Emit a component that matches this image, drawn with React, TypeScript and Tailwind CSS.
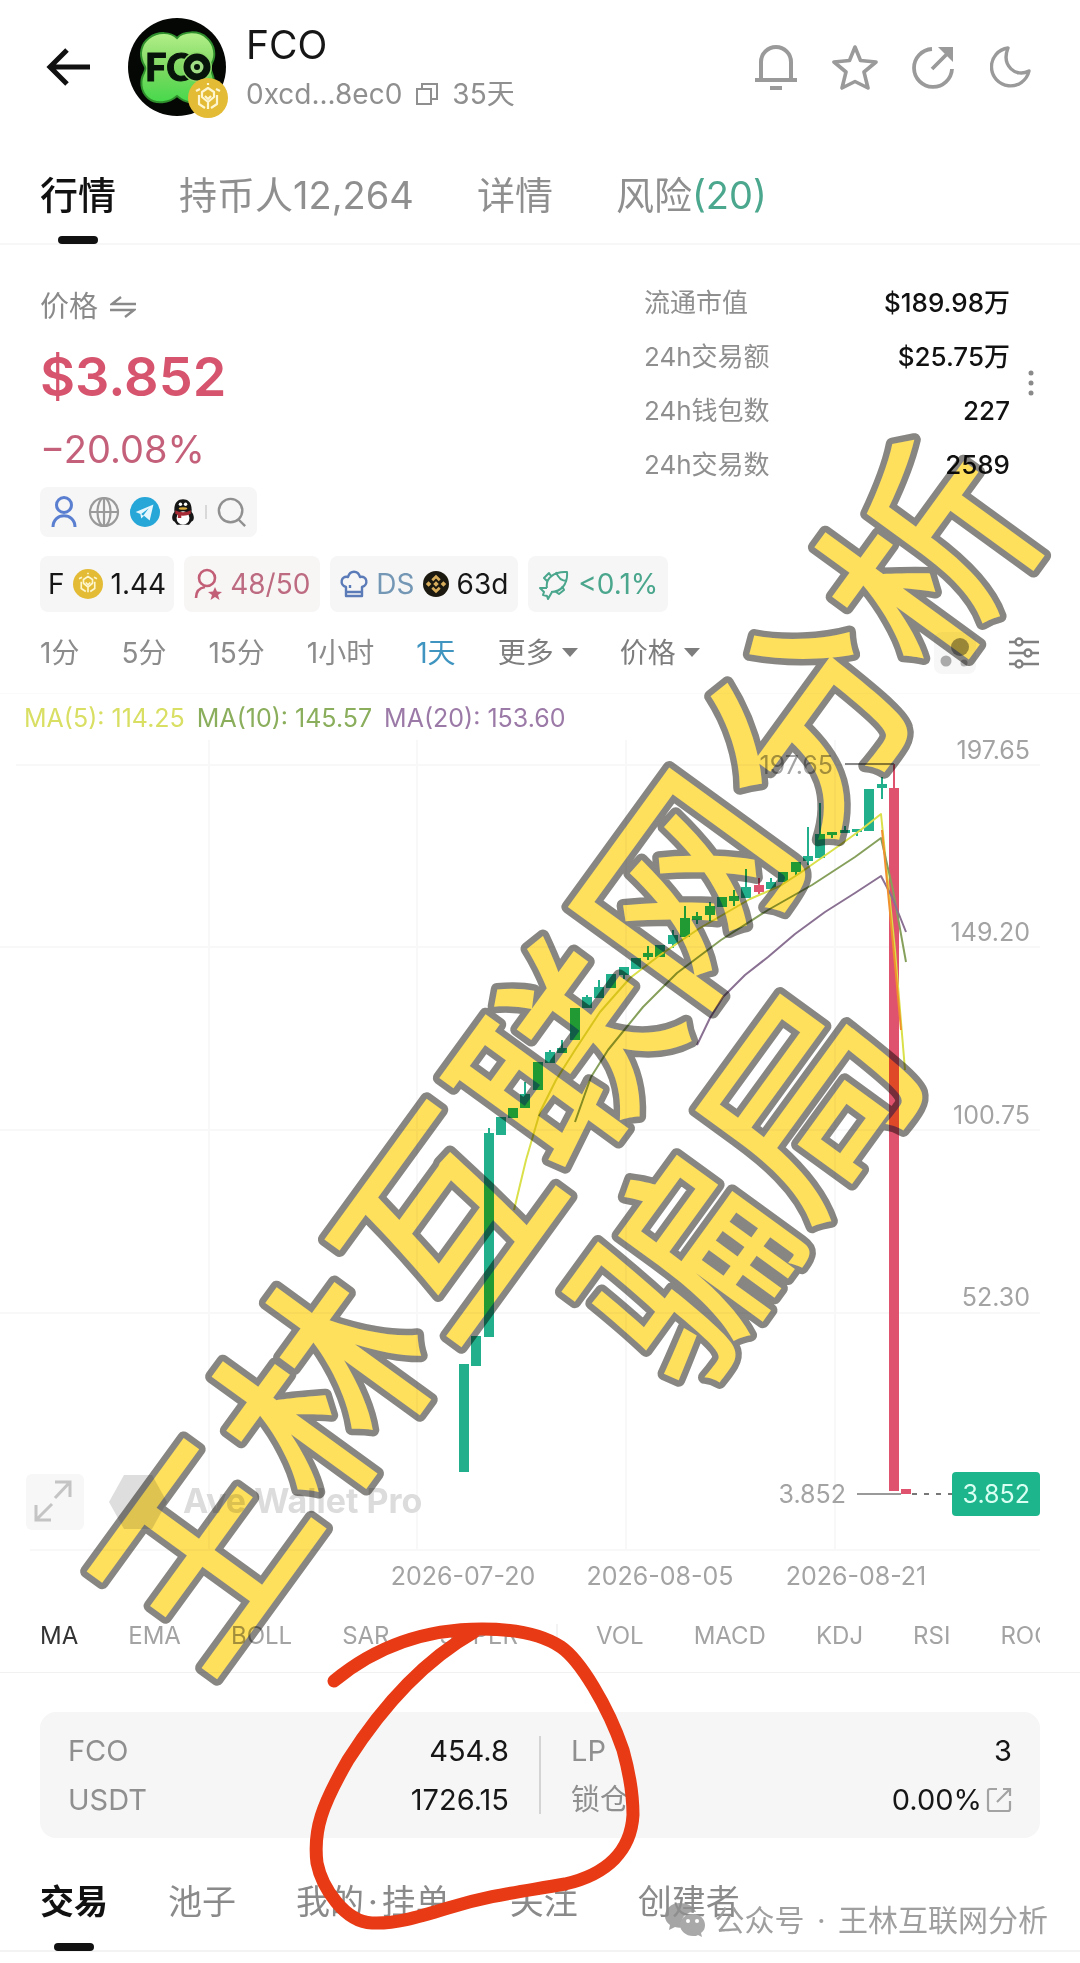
import React from "react";

type Candle = { top: number; bottom: number; high?: number; low?: number; down?: boolean };

const candles: Candle[] = [
  { top: 1364, bottom: 1472 },
  { top: 1336, bottom: 1366 },
  { top: 1133, bottom: 1337, high: 1128 },
  { top: 1117, bottom: 1135 },
  { top: 1108, bottom: 1118 },
  { top: 1094, bottom: 1108, high: 1082 },
  { top: 1062, bottom: 1090 },
  { top: 1052, bottom: 1063, high: 1050 },
  { top: 1048, bottom: 1053, high: 1040 },
  { top: 1008, bottom: 1040 },
  { top: 997, bottom: 1008, high: 995 },
  { top: 987, bottom: 998, high: 980 },
  { top: 974, bottom: 988 },
  { top: 967, bottom: 975, low: 979 },
  { top: 958, bottom: 969 },
  { top: 953, bottom: 957, high: 946, low: 960 },
  { top: 945, bottom: 957 },
  { top: 935, bottom: 944, high: 930, low: 948 },
  { top: 918, bottom: 937, high: 906 },
  { top: 916, bottom: 920, high: 912, low: 924 },
  { top: 906, bottom: 915, high: 902, low: 921 },
  { top: 897, bottom: 907 },
  { top: 896, bottom: 901, high: 890, low: 906 },
  { top: 887, bottom: 898, high: 869 },
  { top: 885, bottom: 892, high: 878, low: 894, down: true },
  { top: 882, bottom: 889, high: 878 },
  { top: 872, bottom: 882 },
  { top: 862, bottom: 872, low: 876 },
  { top: 856, bottom: 861, high: 827, low: 865 },
  { top: 834, bottom: 858, high: 803 },
  { top: 832, bottom: 835, low: 838 },
  { top: 830, bottom: 833, high: 826 },
  { top: 829, bottom: 832, low: 836 },
  { top: 789, bottom: 831 },
  { top: 784, bottom: 788, high: 777, low: 799 },
  { top: 788, bottom: 1491, high: 764, down: true },
  { top: 1489, bottom: 1494, down: true },
];

const stats = [
  ["流通市值", "$189.98万"],
  ["24h交易额", "$25.75万"],
  ["24h钱包数", "227"],
  ["24h交易数", "2589"],
];

const UP = "#22b08c";
const DOWN = "#e0536e";

function BnbCoin({ className }: { className: string }) {
  return (
    <svg viewBox="0 0 40 40" className={className} fill="none" aria-hidden="true">
      <circle cx="20" cy="20" r="20" fill="#e3bb35" />
      <g stroke="#fdf6cf" strokeWidth="2.2" strokeLinejoin="round">
        <path d="M14 14l6-4 6 4v5l-6 5-6-5zM20 24v7M11 17v9l6 4M29 17v9l-6 4" />
        <path d="M8 13l4-2M32 13l-4-2M20 5v2M17 18l3 3 3-3" />
      </g>
    </svg>
  );
}

function Header() {
  return (
    <header className="flex h-[134px] items-center pl-[46px] pr-12">
      <button aria-label="返回" className="mr-9">
        <svg viewBox="0 0 46 40" className="h-10 w-[46px]" fill="none" stroke="#111" strokeWidth="5">
          <path d="M44 20H5M21 3L4 20l17 17" />
        </svg>
      </button>
      <div className="relative h-[98px] w-[98px] shrink-0">
        <svg viewBox="0 0 98 98" className="h-full w-full">
          <defs>
            <linearGradient id="leaf" x1="0" y1="0" x2="0" y2="1">
              <stop offset="0" stopColor="#b4f08a" />
              <stop offset="0.5" stopColor="#7fd962" />
              <stop offset="1" stopColor="#46d94c" />
            </linearGradient>
          </defs>
          <circle cx="49" cy="49" r="49" fill="#050705" />
          <path
            d="M49 20c6-7 22-8 30 0 8 7 9 18 5 25-2 5-2 5 0 10 4 10 2 21-7 27-9 5-20 3-28-4-8 7-21 9-29 2-8-7-8-18-4-25 2-5 2-5-1-10-4-9-2-19 6-25 9-7 22-6 28 0z"
            fill="url(#leaf)"
            stroke="#2f8f2c"
            strokeWidth="2"
          />
          <text x="17" y="63" fontFamily="Lato, sans-serif" fontWeight="900" fontSize="38" fill="#07140a" stroke="#07140a" strokeWidth="1">
            FC
          </text>
          <circle cx="69" cy="49" r="15" fill="#8edb6c" />
          <circle cx="69" cy="49" r="10" fill="#9fdc84" stroke="#07140a" strokeWidth="7" />
          <circle cx="69" cy="49" r="3" fill="#07140a" />
        </svg>
        <BnbCoin className="absolute -bottom-0.5 -right-0.5 h-10 w-10" />
      </div>
      <div className="ml-5 flex-1">
        <h1 className="text-[39px] leading-[46px] text-[#161616]">FCO</h1>
        <div className="mt-2 flex items-center text-[28px] leading-[36px] text-[#8f8f8f]">
          <span>0xcd...8ec0</span>
          <button aria-label="复制地址" className="mx-[13px]">
            <svg viewBox="0 0 24 24" className="h-6 w-6" fill="none" stroke="#8f8f8f" strokeWidth="2">
              <path d="M2 7h14v15H2zM7 7V2h15v15h-6" />
            </svg>
          </button>
          <span>35天</span>
        </div>
      </div>
      <div className="flex items-center gap-[34px]">
        <button aria-label="提醒">
          <svg viewBox="0 0 44 46" className="h-[46px] w-11" fill="none" stroke="#9a9a9a" strokeWidth="4">
            <path d="M7 35V18a15 15 0 0 1 30 0v17M1 36h42M16 44h12" />
          </svg>
        </button>
        <button aria-label="收藏">
          <svg viewBox="0 0 46 46" className="h-[46px] w-[46px]" fill="none" stroke="#9a9a9a" strokeWidth="3.6" strokeLinejoin="round">
            <path d="M23 3l5.500 13.500 15.500 1.500-12 10 4 16L23 37.500 10 44l4-16L2 18l15.500-1.500z" />
          </svg>
        </button>
        <button aria-label="分享">
          <svg viewBox="0 0 44 44" className="h-11 w-11" fill="none" stroke="#9a9a9a" strokeWidth="3.8">
            <path d="M20 4A19 19 0 1 0 40 24M20 24L35 9" />
            <path d="M26 2h15v15z" fill="#9a9a9a" stroke="none" />
          </svg>
        </button>
        <button aria-label="深色模式">
          <svg viewBox="0 0 42 42" className="h-[42px] w-[42px]" fill="none" stroke="#9a9a9a" strokeWidth="3.4" strokeLinejoin="round">
            <path d="M18 2A19 19 0 1 0 39 25C26 32 11 20 18 2z" />
          </svg>
        </button>
      </div>
    </header>
  );
}

function Summary() {
  return (
    <section className="flex justify-between pl-10 pr-11">
      <div>
        <button className="mt-[42px] flex h-10 items-center gap-3 text-[29px] leading-10 text-[#8a8a8a]">
          价格
          <svg viewBox="0 0 26 22" className="h-[22px] w-[26px]" fill="none" stroke="#8a8a8a" strokeWidth="2.400">
            <path d="M26 8H2l9-7M0 14h24l-9 7" />
          </svg>
        </button>
        <p className="mt-5 text-[54px] font-semibold leading-[60px] text-[#d6546d]">$3.852</p>
        <p className="mt-5 text-[38px] leading-[44px] text-[#c4607a]">−20.08%</p>
        <div className="mt-4 flex h-[50px] w-[217px] items-center justify-between rounded-lg bg-[#f6f6f6] px-2.5">
          <svg viewBox="0 0 28 32" className="h-8 w-7" fill="none" stroke="#5b7fd0" strokeWidth="3">
            <circle cx="14" cy="9" r="7.500" />
            <path d="M3 31c0-15 22-15 22 0" />
          </svg>
          <svg viewBox="0 0 32 32" className="h-8 w-8" fill="none" stroke="#9a9a9a" strokeWidth="2.200">
            <circle cx="16" cy="16" r="14" />
            <ellipse cx="16" cy="16" rx="6.500" ry="14" />
            <path d="M2 16h28M16 2v28" />
          </svg>
          <svg viewBox="0 0 32 32" className="h-[30px] w-[30px]">
            <circle cx="16" cy="16" r="16" fill="#27a6d8" />
            <path d="M6 16L25 8l-4 17-6-5-3 3-1-5z" fill="#e6f6fd" />
            <path d="M12 18l8-6-6 8z" fill="#27a6d8" />
          </svg>
          <svg viewBox="0 0 28 34" className="h-[30px] w-6">
            <path d="M4 28c-3 0-4-7 0-11C3 6 8 2 14 2s11 4 10 15c4 4 3 11 0 11l-3 4H7z" fill="#161616" />
            <ellipse cx="14" cy="24" rx="7.500" ry="8" fill="#fff" />
            <path d="M5 15c5 3 13 3 18 0v4c-5 3-13 3-18 0z" fill="#a52a33" />
            <path d="M8 18h4v6H8z" fill="#a52a33" />
            <circle cx="11" cy="8" r="2" fill="#fff" />
            <circle cx="17" cy="8" r="2" fill="#fff" />
            <ellipse cx="14" cy="13" rx="5" ry="1.500" fill="#d8ab3c" />
          </svg>
          <span className="h-3.5 w-0.5 bg-[#d8d8d8]" />
          <svg viewBox="0 0 32 32" className="h-[30px] w-[30px]" fill="none" stroke="#909090" strokeWidth="2.600">
            <circle cx="14.500" cy="14.500" r="12.500" />
            <path d="M23 24l7 7" />
          </svg>
        </div>
      </div>
      <div className="flex items-center gap-4 self-start pt-[30px]">
        <dl className="w-[366px] text-[26px]">
          {stats.map(([label, value]) => (
            <div key={label} className="flex h-[54px] items-center justify-between">
              <dt className="text-[#8f8f8f]">{label}</dt>
              <dd className="font-medium text-[#111]">{value}</dd>
            </div>
          ))}
        </dl>
        <button aria-label="更多数据">
          <svg viewBox="0 0 10 28" className="h-7 w-2.5" fill="#8a8a8a">
            <circle cx="5" cy="4" r="2.500" />
            <circle cx="5" cy="14" r="2.500" />
            <circle cx="5" cy="24" r="2.500" />
          </svg>
        </button>
      </div>
    </section>
  );
}

function Chips() {
  return (
    <div className="mt-[19px] flex gap-2.5 px-10 text-[28px] leading-8 text-[#161616]">
      <div className="flex h-14 items-center gap-2 rounded-lg bg-[#f6f6f6] px-2">
        F <BnbCoin className="h-[30px] w-[30px]" /> 1.44
      </div>
      <div className="flex h-14 items-center gap-2 rounded-lg bg-[#f8f5f5] px-2.5 text-[#bd6b80]">
        <svg viewBox="0 0 28 32" className="h-8 w-7" fill="none" stroke="#c25f77" strokeWidth="2.600">
          <circle cx="13" cy="10" r="8" />
          <path d="M2 30c0-6 3-10 9-11" />
          <path d="M21 19l2 4.500 5 .5-4 3 1.500 5-4.500-3-4.500 3 1.500-5-4-3 5-.5z" fill="#c25f77" stroke="none" />
        </svg>
        48/50
      </div>
      <div className="flex h-14 items-center gap-2 rounded-lg bg-[#f6f6f6] px-2.5">
        <svg viewBox="0 0 28 28" className="h-7 w-7" fill="none" stroke="#5b7bb8" strokeWidth="2.400" strokeLinejoin="round">
          <path d="M6 17C-1 15 1 5 8 7c2-7 10-7 12 0 7-2 9 8 2 10v9H6zM6 22h16M10 15v3" />
        </svg>
        <span className="text-[#7397b5]">DS</span>
        <svg viewBox="0 0 28 28" className="h-[26px] w-[26px]">
          <circle cx="14" cy="14" r="14" fill="#1c1a10" />
          <path d="M14 4l5 5-2 2-3-3-3 3-2-2zM14 24l5-5-2-2-3 3-3-3-2 2zM14 11l3 3-3 3-3-3zM6 11l3 3-3 3-3-3zM22 11l3 3-3 3-3-3z" fill="#d8ad5c" />
        </svg>
        63d
      </div>
      <div className="flex h-14 items-center gap-2 rounded-lg bg-[#f6f6f6] px-2.5 text-[#4aa68c]">
        <svg viewBox="0 0 32 32" className="h-8 w-8" fill="none" stroke="#4aa68c" strokeWidth="2" strokeLinejoin="round">
          <path d="M9 20C7 10 17 3 29 4c1 12-6 20-16 20M9 20H2l4 4-1 3 4 1 1 3 4-7M13 8l-2-3-5 5 3 3M18 4c2 6 5 9 11 9M24 18l2 4-5 4-3-2" />
        </svg>
        &lt;0.1%
      </div>
    </div>
  );
}

function Toolbar() {
  const caret = <span className="ml-2 border-x-8 border-t-[9px] border-x-transparent border-t-[#7d7d7d]" />;
  return (
    <div className="flex h-[82px] items-center gap-[42px] border-b border-[#fafafa] px-10 text-[28px] text-[#8c8c8c]">
      <button>1分</button>
      <button>5分</button>
      <button>15分</button>
      <button>1小时</button>
      <button className="text-[#3f95c0]">1天</button>
      <button className="flex items-center text-[#7d7d7d]">更多{caret}</button>
      <button className="flex items-center text-[#7d7d7d]">价格{caret}</button>
      <div className="ml-auto flex items-center gap-8">
        <button aria-label="气泡图" className="rounded-lg bg-[#f7f7f7] p-1">
          <svg viewBox="0 0 34 34" className="h-[34px] w-[34px]">
            <circle cx="22" cy="11" r="9" fill="#999" />
            <circle cx="8" cy="25" r="5.500" fill="#aaa" />
            <circle cx="26" cy="27" r="3.500" fill="#b5b5b5" />
          </svg>
        </button>
        <button aria-label="指标设置">
          <svg viewBox="0 0 32 32" className="h-8 w-8" fill="none" stroke="#808080" strokeWidth="2.400">
            <path d="M1 5h6M15 5h16M1 16h15M24 16h7M1 27h6M15 27h16" />
            <circle cx="11" cy="5" r="3.500" />
            <circle cx="20" cy="16" r="3.500" />
            <circle cx="11" cy="27" r="3.500" />
          </svg>
        </button>
      </div>
    </div>
  );
}

function Chart() {
  return (
    <section>
      <div className="flex h-[46px] items-center gap-3 pl-6 pt-1 text-[25px]">
        <span className="text-[#d9df63]">MA(5): 114.25</span>
        <span className="text-[#8aae5c]">MA(10): 145.57</span>
        <span className="text-[#9c7aa8]">MA(20): 153.60</span>
      </div>
      <svg viewBox="0 740 1080 860" className="block w-full" fontFamily="Inter, sans-serif" fontSize="25" role="img" aria-label="FCO 日线图">
        <g stroke="#f8f8f8" strokeWidth="2">
          <path d="M16 765H1040M0 947H1040M0 1130H1040M0 1313H1040M30 1550H1040" />
          <path d="M209 740V1550M417 740V1550M626 740V1550M835 740V1550" />
        </g>

        <rect x="26" y="1474" width="58" height="56" rx="6" fill="#f7f7f7" />
        <path d="M55 1482h15v15M70 1482L55 1498M36 1505v15h15M36 1520l16-16" fill="none" stroke="#c4c4c4" strokeWidth="3" />
        <path d="M124 1475h28l15 27-15 27h-28l-15-27z" fill="#dedede" />
        <text x="183" y="1513" fontSize="34" fontWeight="700" fill="#dcdcdc">
          Ave Wallet Pro
        </text>

        {candles.map((c, i) => {
          const x = Math.round(459 + i * 12.28);
          const color = c.down ? DOWN : UP;
          return (
            <g key={i} fill={color}>
              <rect x={x} y={c.top} width="10" height={c.bottom - c.top} />
              <rect x={x + 4} y={c.high ?? c.top} width="2" height={(c.low ?? c.bottom) - (c.high ?? c.top)} />
            </g>
          );
        })}

        <g fill="none" strokeWidth="2" strokeLinejoin="round">
          <path
            d="M514 1210L526 1160 540 1112 556 1080 575 1050 600 1012 630 978 660 955 700 928 750 899 780 886 800 873 840 845 862 829 881 814 895 950 905 1070"
            stroke="#d9e04a"
          />
          <path d="M575 1122L591 1077 608 1050 643 1007 677 973 721 940 768 910 812 885 855 857 881 838 893 890 906 962" stroke="#86a05c" />
          <path d="M697 1045L710 1018 723 997 745 975 768 957 795 934 825 912 855 893 881 876 892 897 906 932" stroke="#8a7092" />
          <path d="M882 830L896 975 901 1030" stroke="#f0912e" />
        </g>

        <g fill="#a3a3a3">
          <text x="833" y="774" textAnchor="end">197.65</text>
          <path d="M845 764h49" stroke="#888" strokeWidth="2" />
          <text x="846" y="1503" textAnchor="end">3.852</text>
          <path d="M857 1494h44" stroke="#999" strokeWidth="2" />
          <path d="M912 1494h40" stroke="#777" strokeWidth="2" strokeDasharray="5 7" />
          <g textAnchor="end">
            <text x="1030" y="759">197.65</text>
            <text x="1030" y="941">149.20</text>
            <text x="1030" y="1124">100.75</text>
            <text x="1030" y="1306">52.30</text>
          </g>
          <g textAnchor="middle">
            <text x="463" y="1585">2026-07-20</text>
            <text x="660" y="1585">2026-08-05</text>
            <text x="856" y="1585">2026-08-21</text>
          </g>
        </g>
        <rect x="952" y="1472" width="88" height="44" rx="4" fill="#1cb58c" />
        <text x="1030" y="1503" textAnchor="end" fill="#d9fff2">
          3.852
        </text>
      </svg>
    </section>
  );
}

function Indicators() {
  return (
    <div className="border-b border-[#f1f1f1]">
      <div className="mx-10 flex h-[72px] items-center gap-[50px] overflow-hidden whitespace-nowrap text-[24px] text-[#a3a3a3]">
        <button className="text-[#333]">MA</button>
        <button>EMA</button>
        <button>BOLL</button>
        <button>SAR</button>
        <button>SUPER</button>
        <span className="-mx-3 h-6 w-0.5 shrink-0 bg-[#f3f3f3]" />
        <button>VOL</button>
        <button>MACD</button>
        <button>KDJ</button>
        <button>RSI</button>
        <button>ROC</button>
      </div>
    </div>
  );
}

function Pool() {
  return (
    <section className="mx-10 mt-[39px] flex h-[126px] items-center rounded-2xl bg-[#f6f6f6] px-7 text-[29px] leading-[49px]">
      <dl className="flex-1 text-[#161616]">
        <div className="flex justify-between">
          <dt className="text-[#8f8f8f]">FCO</dt>
          <dd>454.8</dd>
        </div>
        <div className="flex justify-between">
          <dt className="text-[#8f8f8f]">USDT</dt>
          <dd>1726.15</dd>
        </div>
      </dl>
      <span className="mx-[30px] h-[78px] w-0.5 bg-[#d4d4d4]" />
      <dl className="flex-1 text-[#161616]">
        <div className="flex justify-between">
          <dt className="text-[#8f8f8f]">LP</dt>
          <dd>3</dd>
        </div>
        <div className="flex justify-between">
          <dt className="text-[#8f8f8f]">锁仓</dt>
          <dd className="flex items-center gap-1">
            0.00%
            <a href="#lock" aria-label="锁仓详情">
              <svg viewBox="0 0 26 26" className="h-[26px] w-[26px]" fill="none" stroke="#a3a3a3" strokeWidth="2.200">
                <path d="M11 2H4a2 2 0 0 0-2 2v18a2 2 0 0 0 2 2h18a2 2 0 0 0 2-2v-8M17 2h7v7M24 2L11 15" />
              </svg>
            </a>
          </dd>
        </div>
      </dl>
    </section>
  );
}

function Watermark() {
  return (
    <svg viewBox="0 0 1080 1963" className="pointer-events-none absolute inset-x-0 top-0 w-full mix-blend-multiply">
      <g
        fontFamily="'Noto Sans CJK SC', sans-serif"
        fontSize="206"
        fontWeight="500"
        textAnchor="middle"
        fill="#ffe05c"
        stroke="#878683"
        strokeWidth="13"
        strokeLinejoin="round"
        paintOrder="stroke"
        transform="translate(566 1054) rotate(-54)"
      >
        <text x="0" y="77">王林互联网分析</text>
        <text x="0" y="301">骗局</text>
      </g>
    </svg>
  );
}

function Scribble() {
  return (
    <svg viewBox="0 0 1080 1963" className="pointer-events-none absolute inset-x-0 top-0 w-full" fill="none">
      <path
        d="M334 1681C375 1647 425 1629 482 1629C512 1629 540 1633 561 1647C580 1660 608 1706 623 1750C630 1775 633 1800 633 1815C631 1850 608 1874 565 1884C520 1892 490 1895 448 1908C415 1918 395 1924 372 1923C345 1922 322 1888 317 1863C313 1830 322 1805 348 1760C385 1702 425 1660 474 1632"
        stroke="#e83a14"
        strokeWidth="13"
        strokeLinecap="round"
        strokeLinejoin="round"
      />
    </svg>
  );
}

export default function App() {
  return (
    <main lang="zh-CN" className="relative w-full overflow-hidden bg-white pb-3 font-[Inter,'Noto_Sans_CJK_SC',sans-serif]">
      <Header />
      <nav className="flex h-[111px] items-start gap-[63px] border-b-2 border-[#f7f7f7] px-10 pt-9 text-[38px] leading-[50px] text-[#8f8f8f]">
        <button className="flex flex-col items-center font-medium text-[#111]">
          行情
          <span className="mt-4 h-2 w-10 rounded-full bg-[#111]" />
        </button>
        <button>持币人12,264</button>
        <button>详情</button>
        <button>
          风险<span className="text-[#4ba78d]">(20)</span>
        </button>
      </nav>
      <Summary />
      <Chips />
      <Toolbar />
      <Chart />
      <Indicators />
      <Pool />
      <nav className="flex h-[114px] items-start gap-[60px] border-b-2 border-[#f3f3f3] px-10 pt-[42px] text-[34px] leading-[44px] text-[#8a8a8a]">
        <button className="flex flex-col items-center font-bold text-[#111]">
          交易
          <span className="mt-[19px] h-2 w-10 rounded-full bg-[#111]" />
        </button>
        <button>池子</button>
        <button>
          我的<span className="mx-1">·</span>挂单
        </button>
        <button>关注</button>
        <button>创建者</button>
      </nav>
      <Watermark />
      <Scribble />
      <div className="absolute bottom-6 right-8 flex items-center gap-2 text-[30px] leading-10 text-[#9f9f9f]">
        <svg viewBox="0 0 42 34" className="h-[34px] w-[42px]">
          <path d="M16 0C7 0 1 6 1 13c0 4 2 7 5 9l-1 5 6-3c3 1 6 1 8 0C15 14 23 8 32 9 30 3 23 0 16 0z" fill="#8f8f8f" opacity="0.8" />
          <path d="M29 11c-8 0-13 5-13 11s6 11 13 11c2 0 4 0 5-1l4 2-1-4c3-2 4-5 4-8 0-6-5-11-12-11z" fill="#a9a9a9" />
          <circle cx="24" cy="18" r="2" fill="#fff" />
          <circle cx="33" cy="18" r="2" fill="#fff" />
        </svg>
        <span>
          公众号<span className="mx-1"> · </span>王林互联网分析
        </span>
      </div>
    </main>
  );
}
